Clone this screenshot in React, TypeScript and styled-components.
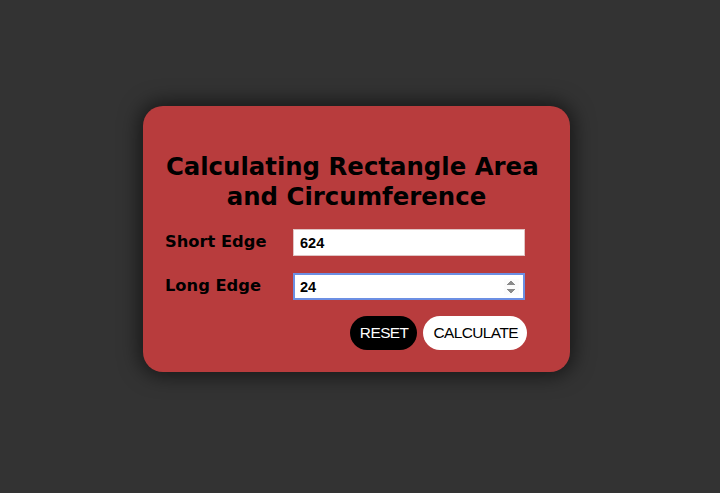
import React, { useState } from "react";
import styled, { createGlobalStyle } from "styled-components";

const Global = createGlobalStyle`
  html, body { margin: 0; padding: 0; background: #333333; }
  body { font-family: "DejaVu Sans", Verdana, sans-serif; }
`;

const Page = styled.div`
  min-height: 493px;
  box-sizing: border-box;
  display: flex;
  align-items: center;
  justify-content: center;
  padding: 0 7px 15px 0;
`;

const Card = styled.div`
  width: 427px;
  height: 266px;
  box-sizing: border-box;
  background: #b83c3d;
  border-radius: 20px;
  box-shadow: 0 0 20px 4px rgba(0, 0, 0, 0.55);
  padding: 46px 22px 0 22px;
  display: flex;
  flex-direction: column;
`;

const Title = styled.h1`
  margin: 0 0 17px 0;
  font-family: "DejaVu Sans", Verdana, sans-serif;
  font-weight: bold;
  font-size: 24.4px;
  line-height: 30px;
  text-align: center;
  color: #000;
`;

const Row = styled.div`
  display: flex;
  align-items: center;
  height: 27px;
  margin-bottom: 17px;
`;

const Label = styled.label`
  width: 128px;
  font-family: "DejaVu Sans", Verdana, sans-serif;
  font-weight: bold;
  font-size: 16.3px;
  color: #000;
  margin-top: -3px;
`;

const Input = styled.input<{ $focused?: boolean }>`
  width: 232px;
  height: 27px;
  box-sizing: border-box;
  border: ${(p) => (p.$focused ? "2px solid #6c8fe3" : "1px solid #e0c4c4")};
  padding: 0 4px 0 ${(p) => (p.$focused ? "5px" : "6px")};
  font-family: "Liberation Sans", Arial, sans-serif;
  font-weight: bold;
  font-size: 14.5px;
  color: #000;
  background: #fff;
  outline: none;
  &:focus { outline: none; }
  &::-webkit-inner-spin-button { background: #efefef; }
`;

const Actions = styled.div`
  display: flex;
  justify-content: flex-end;
  gap: 6px;
  padding-right: 21px;
  margin-top: -1px;
`;

const Pill = styled.button<{ $dark?: boolean }>`
  height: 34px;
  border: none;
  border-radius: 17px;
  padding: 0 9px 0 10px;
  font-family: "Liberation Sans", Arial, sans-serif;
  font-size: 15.4px;
  letter-spacing: -0.55px;
  background: ${(p) => (p.$dark ? "#000" : "#fff")};
  color: ${(p) => (p.$dark ? "#fff" : "#000")};
  cursor: pointer;
`;

export default function App() {
  const [shortEdge, setShortEdge] = useState("624");
  const [longEdge, setLongEdge] = useState("24");
  return (
    <>
      <Global />
      <Page>
        <Card>
          <Title>
            Calculating Rectangle Area{"\u00a0"}
            <br />
            and Circumference
          </Title>
          <Row>
            <Label>Short Edge</Label>
            <Input type="number" value={shortEdge} onChange={(e) => setShortEdge(e.target.value)} />
          </Row>
          <Row>
            <Label>Long Edge</Label>
            <Input type="number" $focused autoFocus value={longEdge} onChange={(e) => setLongEdge(e.target.value)} />
          </Row>
          <Actions>
            <Pill $dark>RESET</Pill>
            <Pill>CALCULATE</Pill>
          </Actions>
        </Card>
      </Page>
    </>
  );
}
